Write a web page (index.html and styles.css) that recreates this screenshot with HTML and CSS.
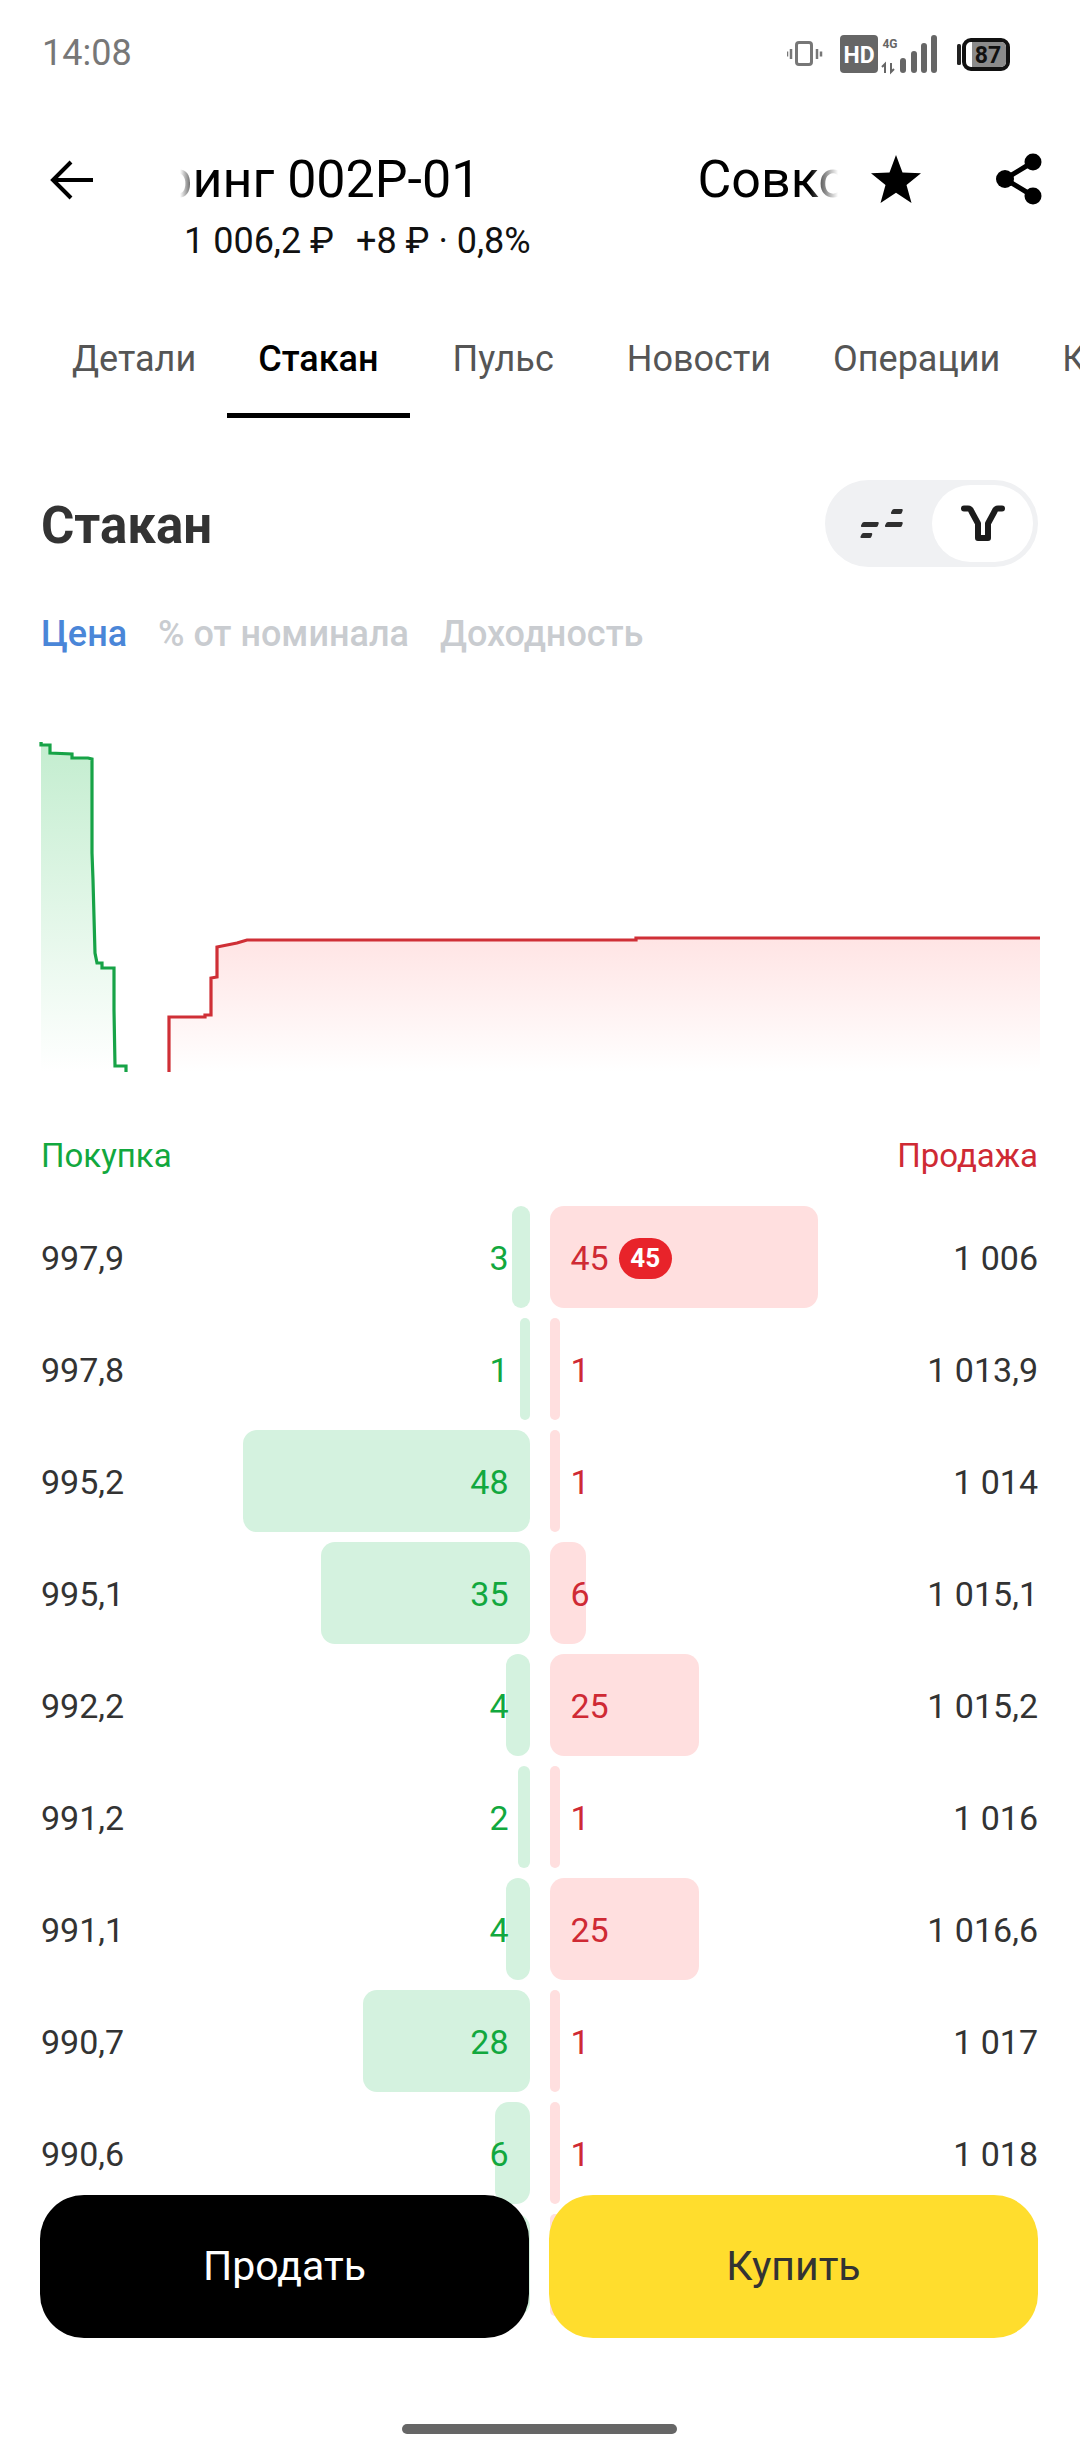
FILE: index.html
```html
<!DOCTYPE html>
<html lang="ru">
<head>
<meta charset="utf-8">
<title>Стакан</title>
<link rel="stylesheet" href="styles.css">
</head>
<body>
<div class="screen">
  <div class="statusbar">
    <span class="time">14:08</span>
    <svg class="status-icons" width="230" height="44" viewBox="0 0 230 44">
      <g fill="none" stroke="#777" stroke-width="3">
        <rect x="9.500" y="7.500" width="15" height="22" rx="2.500"/>
        <path d="M4 14v10M30 14v10M0 16.500v5M34 16.500v5" stroke-width="2.500"/>
      </g>
      <rect x="53" y="0" width="38" height="38" rx="4" fill="#666"/>
      <text x="72" y="28" class="st-hd">HD</text>
      <text x="103" y="13" class="st-4g">4G</text>
      <path d="M98 38v-9l-3 3M104 28v9l3-3" fill="none" stroke="#666" stroke-width="2"/>
      <g fill="#666">
        <rect x="113" y="23" width="6" height="15" rx="3"/>
        <rect x="124" y="16" width="6" height="22" rx="3"/>
        <rect x="134" y="8" width="6" height="30" rx="3"/>
        <rect x="144" y="0" width="6" height="38" rx="3"/>
      </g>
      <rect x="170" y="9" width="4" height="21" rx="1.500" fill="#222"/>
      <rect x="177" y="5" width="44" height="29" rx="7" fill="#fff" stroke="#111" stroke-width="4"/>
      <path d="M185 7h29a5 5 0 0 1 5 5v15a5 5 0 0 1-5 5h-29z" fill="#8b8b8b"/>
      <text x="201" y="28" class="st-batt">87</text>
    </svg>
  </div>

  <header class="header">
    <svg class="back" width="44" height="40" viewBox="0 0 44 40">
      <path d="M43 20H3M21 2 3 20l18 18" fill="none" stroke="#000" stroke-width="4"/>
    </svg>
    <div class="titles">
      <div class="marquee"><div class="marquee-track"><span>Совкомбанк Факторинг 002P-01</span><span>Совкомбанк Факторинг 002P-01</span></div></div>
      <div class="subtitle"><span>1 006,2 ₽</span><span>+8 ₽ · 0,8%</span></div>
    </div>
    <svg class="star" width="50" height="48" viewBox="0 0 50 48">
      <path d="M25 0l6.500 17.500L50 18.300 35.500 30 40.500 48 25 37.700 9.500 48l5-18L0 18.300l18.500-.8z"/>
    </svg>
    <svg class="share" width="48" height="52" viewBox="0 0 48 52">
      <path d="M38 9 10 26l28 17" fill="none" stroke="#000" stroke-width="5"/>
      <circle cx="38" cy="9" r="8.500"/><circle cx="10" cy="26" r="9"/><circle cx="38" cy="43" r="8.500"/>
    </svg>
  </header>

  <nav class="tabs">
    <span class="tab">Детали</span>
    <span class="tab active">Стакан</span>
    <span class="tab pulse">Пульс</span>
    <span class="tab">Новости</span>
    <span class="tab">Операции</span>
    <span class="tab">Куда</span>
  </nav>

  <div class="section-head">
    <h1>Стакан</h1>
    <div class="toggle">
      <span class="toggle-cell">
        <svg width="44" height="32" viewBox="0 0 44 32"><g fill="#2f2f2f">
          <path d="M33 2.500q.4-1.500 2-1.500h8q1 0 .7 1.500l-.7 2q-.4 1.500-2 1.500h-8q-1.500 0-1-1.500z"/>
          <path d="M3 15.500q.4-1.500 2-1.500h14q1 0 .7 1.500l-.7 2q-.4 1.500-2 1.500H3q-1.500 0-1-1.500z"/>
          <path d="M27 15.500q.4-1.500 2-1.500h14q1 0 .7 1.500l-.7 2q-.4 1.500-2 1.500H27q-1.500 0-1-1.500z"/>
          <path d="M2.500 26.500q.4-1.500 2-1.500h8q1 0 .7 1.500l-.7 2q-.4 1.500-2 1.500h-8q-1.500 0-1-1.500z"/>
        </g></svg>
      </span>
      <span class="toggle-cell on">
        <svg width="44" height="38" viewBox="0 0 44 38">
          <path d="M3 3.500h4q2.500 0 3.500 3l6.500 12V33h10V18.500l6.500-12q1-3 3.500-3h4" fill="none" stroke="#1c1c1c" stroke-width="6" stroke-linejoin="round" stroke-linecap="round"/>
        </svg>
      </span>
    </div>
  </div>

  <div class="segments">
    <span class="seg on">Цена</span>
    <span class="seg">% от номинала</span>
    <span class="seg">Доходность</span>
  </div>

  <svg class="chart" width="1080" height="418" viewBox="0 662 1080 418">
    <defs>
      <linearGradient id="gfill" x1="0" y1="0" x2="0" y2="1">
        <stop offset="0" stop-color="#c3edcf"/><stop offset="1" stop-color="#ffffff"/>
      </linearGradient>
      <linearGradient id="rfill" x1="0" y1="0" x2="0" y2="1">
        <stop offset="0" stop-color="#ffe4e4"/><stop offset="1" stop-color="#ffffff"/>
      </linearGradient>
    </defs>
    <path d="M41 742V1072H126V1066H115L114 1010V968H102V963H97L95 953 94 917 93 880 92 853V759L88 758H72V754L50 753V745H43V742Z" fill="url(#gfill)"/>
    <path d="M41 742V745H50V753L72 754V758H88L92 759V853L93 880 94 917 95 953 97 963H102V968H114V1010L115 1066H126V1072" fill="none" stroke="#17a347" stroke-width="3.200"/>
    <path d="M169 1072V1017H205V1015H211V978L217 977V947L237 943 247 940H636V938H1040V1072Z" fill="url(#rfill)"/>
    <path d="M169 1072V1017H205V1015H211V978L217 977V947L237 943 247 940H636V938H1040" fill="none" stroke="#cf2f36" stroke-width="3.200"/>
  </svg>

  <div class="col-labels">
    <span class="buy-label">Покупка</span>
    <span class="sell-label">Продажа</span>
  </div>

  <div class="book">
    <div class="row"><div class="side bid"><i class="bar" style="width:18px"></i><span class="price">997,9</span><span class="qty">3</span></div><div class="side ask"><i class="bar" style="width:268px"></i><span class="qty">45</span><span class="badge">45</span><span class="price">1 006</span></div></div>
    <div class="row"><div class="side bid"><i class="bar" style="width:10px"></i><span class="price">997,8</span><span class="qty">1</span></div><div class="side ask"><i class="bar" style="width:10px"></i><span class="qty">1</span><span class="price">1 013,9</span></div></div>
    <div class="row"><div class="side bid"><i class="bar" style="width:287px"></i><span class="price">995,2</span><span class="qty">48</span></div><div class="side ask"><i class="bar" style="width:10px"></i><span class="qty">1</span><span class="price">1 014</span></div></div>
    <div class="row"><div class="side bid"><i class="bar" style="width:209px"></i><span class="price">995,1</span><span class="qty">35</span></div><div class="side ask"><i class="bar" style="width:36px"></i><span class="qty">6</span><span class="price">1 015,1</span></div></div>
    <div class="row"><div class="side bid"><i class="bar" style="width:24px"></i><span class="price">992,2</span><span class="qty">4</span></div><div class="side ask"><i class="bar" style="width:149px"></i><span class="qty">25</span><span class="price">1 015,2</span></div></div>
    <div class="row"><div class="side bid"><i class="bar" style="width:12px"></i><span class="price">991,2</span><span class="qty">2</span></div><div class="side ask"><i class="bar" style="width:10px"></i><span class="qty">1</span><span class="price">1 016</span></div></div>
    <div class="row"><div class="side bid"><i class="bar" style="width:24px"></i><span class="price">991,1</span><span class="qty">4</span></div><div class="side ask"><i class="bar" style="width:149px"></i><span class="qty">25</span><span class="price">1 016,6</span></div></div>
    <div class="row"><div class="side bid"><i class="bar" style="width:167px"></i><span class="price">990,7</span><span class="qty">28</span></div><div class="side ask"><i class="bar" style="width:10px"></i><span class="qty">1</span><span class="price">1 017</span></div></div>
    <div class="row"><div class="side bid"><i class="bar" style="width:35px"></i><span class="price">990,6</span><span class="qty">6</span></div><div class="side ask"><i class="bar" style="width:10px"></i><span class="qty">1</span><span class="price">1 018</span></div></div>
    <div class="row"><div class="side bid"><i class="bar" style="width:35px"></i></div><div class="side ask"><i class="bar" style="width:10px"></i></div></div>
    <div class="actions">
      <button class="btn sell">Продать</button>
      <button class="btn buy">Купить</button>
    </div>
  </div>
  <div class="home"></div>
</div>
</body>
</html>
```
FILE: styles.css
```css
* { box-sizing: border-box; }
html, body { margin: 0; padding: 0; background: #fff; }
body { font-family: Roboto, "Noto Sans", sans-serif; color: #333; }
.screen { width: 1080px; height: 2460px; overflow: hidden; background: #fff; }

.statusbar { height: 106px; padding: 35px 0 0 42px; display: flex; justify-content: space-between; align-items: flex-start; }
.time { font-size: 36px; line-height: 36px; color: #777; }
.status-icons { margin-right: 63px; }
.st-hd { font: 700 23px Roboto, sans-serif; fill: #fff; text-anchor: middle; }
.st-4g { font: 700 12px Roboto, sans-serif; fill: #666; text-anchor: middle; }
.st-batt { font: 700 23px Roboto, sans-serif; fill: #111; text-anchor: middle; }

.header { height: 194px; display: flex; align-items: flex-start; position: relative; }
.back { margin: 54px 0 0 50px; flex: none; }
.titles { width: 670px; margin-left: 76px; margin-right: 31px; flex: none; margin-top: 46px; }
.marquee { height: 56px; overflow: hidden; -webkit-mask-image: linear-gradient(90deg, transparent 10px, #000 28px, #000 640px, transparent 668px); mask-image: linear-gradient(90deg, transparent 10px, #000 28px, #000 640px, transparent 668px); }
.marquee-track { display: flex; gap: 217px; white-space: nowrap; font-size: 52px; line-height: 56px; color: #000; margin-left: -474px; }
.subtitle { display: flex; gap: 22px; font-size: 36px; line-height: 40px; color: #111; margin: 13px 0 0 14px; }
.star { margin: 49px 0 0 0; flex: none; }
.share { margin: 47px 0 0 74px; flex: none; }

.tabs { height: 118px; display: flex; padding-left: 41px; overflow: hidden; white-space: nowrap; }
.tab { flex: none; padding: 0 31px; font-size: 36px; line-height: 118px; color: #555; position: relative; border-bottom: 5px solid transparent; }
.tab.active { color: #000; font-weight: 500; border-bottom-color: #000; }
.tab.pulse { margin: 0 11px 0 12px; }

.section-head { margin-top: 62px; height: 87px; padding: 0 42px 0 41px; display: flex; justify-content: space-between; align-items: center; }
h1 { margin: 4px 0 0; font-size: 51px; font-weight: 700; color: #333; }
.toggle { width: 213px; height: 87px; border-radius: 44px; background: #f0f1f3; padding: 5px; display: flex; justify-content: space-between; align-items: stretch; }
.toggle-cell { width: 101px; display: flex; align-items: center; justify-content: center; border-radius: 39px; }
.toggle-cell.on { background: #fff; }

.segments { margin-top: 41px; height: 52px; padding-left: 41px; display: flex; gap: 31px; align-items: center; font-size: 36px; color: #c9ccd0; font-weight: 500; }
.seg.on { color: #4a86d8; }

.chart { display: block; margin-top: 2px; }

.col-labels { margin-top: 49px; height: 52px; padding: 0 42px 0 41px; display: flex; justify-content: space-between; align-items: center; font-size: 33px; }
.buy-label { color: #12a83e; }
.sell-label { color: #cf2a34; }

.book { margin-top: 25px; height: 1132px; overflow: hidden; position: relative; }
.row { height: 112px; display: grid; grid-template-columns: 1fr 1fr; column-gap: 20px; padding: 0 42px 10px 41px; }
.side { position: relative; display: flex; align-items: center; font-size: 34px; padding-top: 2px; }
.bar { position: absolute; top: 0; bottom: 0; border-radius: 14px; }
.bid .bar { right: 0; background: #d4f2df; }
.ask .bar { left: 0; background: #ffdfdf; }
.price { position: relative; color: #333; }
.qty { position: relative; }
.bid { justify-content: space-between; padding-right: 21px; }
.bid .qty { color: #12a83e; }
.ask { padding-left: 21px; }
.ask .qty { color: #cf2a34; }
.ask .price { margin-left: auto; }
.badge { position: relative; margin-left: 10px; width: 53px; height: 41px; border-radius: 21px; background: #e8232a; color: #fff; font-size: 26px; font-weight: 700; line-height: 41px; text-align: center; }

.actions { position: absolute; left: 40px; right: 42px; top: 989px; height: 143px; display: grid; grid-template-columns: 489px 489px; column-gap: 20px; }
.btn { border: 0; border-radius: 44px; font-family: inherit; font-size: 41px; padding-bottom: 2px; }
.btn.sell { background: #000; color: #fff; }
.btn.buy { background: #ffdd2d; color: #333; }

.home { width: 275px; height: 10px; border-radius: 5px; background: #666; margin: 86px 0 0 402px; }
```
